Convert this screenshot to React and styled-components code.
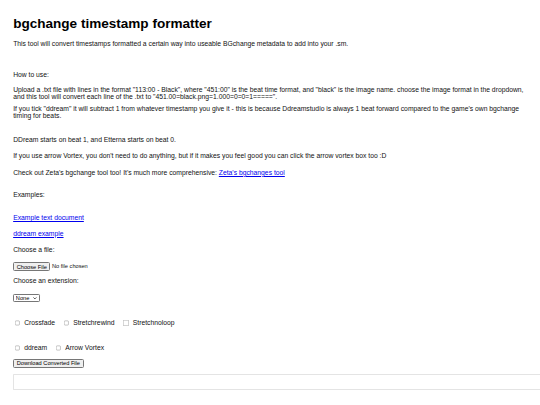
import React from 'react';
import styled, { createGlobalStyle } from 'styled-components';

// the reference is a wide desktop page shot down to 540px, so the page is
// drawn at its own size and zoomed down
const GlobalStyle = createGlobalStyle`
  html, body {
    margin: 0;
    padding: 0;
    background: #fff;
    overflow: hidden;
  }
  body {
    font-family: "Liberation Sans", Arial, sans-serif;
  }
`;

const Page = styled.main`
  zoom: 0.424;
  width: 1274px;
  box-sizing: border-box;
  padding: 37px 39px 0 31px;
  display: flex;
  flex-direction: column;
  align-items: flex-start;
  font-size: 16px;
  color: #111;
`;

const Title = styled.h1`
  font-size: 32px;
  line-height: normal;
  font-weight: bold;
  color: #000;
  margin: 0;
`;

const Text = styled.p`
  margin: ${(p) => p.$mt || 0}px 0 0;
  line-height: 16.3px;
`;

const Link = styled.a`
  color: #0000ee;
  text-decoration: underline;
  cursor: pointer;
`;

const FileInput = styled.input`
  margin-top: ${(p) => p.$mt || 0}px;
  font-family: "Liberation Sans", Arial, sans-serif;
  font-size: 13.33px;
`;

const SelectWrap = styled.div`
  position: relative;
  display: inline-block;
  margin-top: ${(p) => p.$mt || 0}px;

  svg {
    position: absolute;
    right: 7px;
    top: 7px;
    pointer-events: none;
  }
`;

const Select = styled.select`
  appearance: none;
  display: block;
  height: 19px;
  padding: 0 22px 0 4px;
  font-family: "Liberation Sans", Arial, sans-serif;
  font-size: 13.33px;
  color: #000;
  background: #fff;
  border: 1px solid #767676;
  border-radius: 3px;
`;

const CheckRow = styled.div`
  display: flex;
  align-items: center;
  margin-top: ${(p) => p.$mt || 0}px;
`;

const Check = styled.label`
  display: inline-flex;
  align-items: center;
  margin-right: 17px;
  font-size: 16px;
  line-height: normal;

  input {
    width: 13px;
    height: 13px;
    margin: 3px 9px 3px 4px;
  }
`;

const Button = styled.button`
  margin-top: ${(p) => p.$mt || 0}px;
  font-family: "Liberation Sans", Arial, sans-serif;
  font-size: 13.33px;
`;

const Output = styled.textarea`
  display: block;
  width: 1300px;
  height: 36px;
  margin-top: ${(p) => p.$mt || 0}px;
  border: 1px solid #e4e4e4;
  border-radius: 2px;
  resize: none;
  box-sizing: border-box;
`;

const CheckBox = ({ label }) => (
  <Check>
    <input type="checkbox" />
    {label}
  </Check>
);

const App = () => {
  return (
    <Page>
      <GlobalStyle />
      <Title>bgchange timestamp formatter</Title>
      <Text $mt={24}>This tool will convert timestamps formatted a certain way into useable BGchange metadata to add into your .sm.</Text>
      <Text $mt={56}>How to use:</Text>
      <Text $mt={20}>
        Upload a .txt file with lines in the format "113:00 - Black", where "451:00" is the beat time format, and "black" is the image name. choose the image format in the dropdown, and this tool will convert each line of the .txt to "451.00=black.png=1.000=0=0=1=====".
      </Text>
      <Text $mt={12}>
        If you tick "ddream" it will subtract 1 from whatever timestamp you give it - this is because Ddreamstudio is always 1 beat forward compared to the game's own bgchange timing for beats.
      </Text>
      <Text $mt={40}>DDream starts on beat 1, and Etterna starts on beat 0.</Text>
      <Text $mt={23}>If you use arrow Vortex, you don't need to do anything, but if it makes you feel good you can click the arrow vortex box too :D</Text>
      <Text $mt={23}>
        Check out Zeta's bgchange tool too! It's much more comprehensive: <Link>Zeta's bgchanges tool</Link>
      </Text>
      <Text $mt={36}>Examples:</Text>
      <Text $mt={38}><Link>Example text document</Link></Text>
      <Text $mt={21}><Link>ddream example</Link></Text>
      <Text $mt={23}>Choose a file:</Text>
      <FileInput type="file" $mt={19} />
      <Text $mt={17}>Choose an extension:</Text>
      <SelectWrap $mt={20}>
        <Select defaultValue="none">
          <option value="none">None</option>
          <option value="png">.png</option>
          <option value="jpg">.jpg</option>
        </Select>
        <svg width="9" height="6" viewBox="0 0 9 6">
          <path d="M1 1l3.5 3.5L8 1" fill="none" stroke="#000" strokeWidth="1.6" />
        </svg>
      </SelectWrap>
      <CheckRow $mt={40}>
        <CheckBox label="Crossfade" />
        <CheckBox label="Stretchrewind" />
        <CheckBox label="Stretchnoloop" />
      </CheckRow>
      <CheckRow $mt={40}>
        <CheckBox label="ddream" />
        <CheckBox label="Arrow Vortex" />
      </CheckRow>
      <Button $mt={17}>Download Converted File</Button>
      <Output readOnly $mt={15} />
    </Page>
  );
};

export default App;
